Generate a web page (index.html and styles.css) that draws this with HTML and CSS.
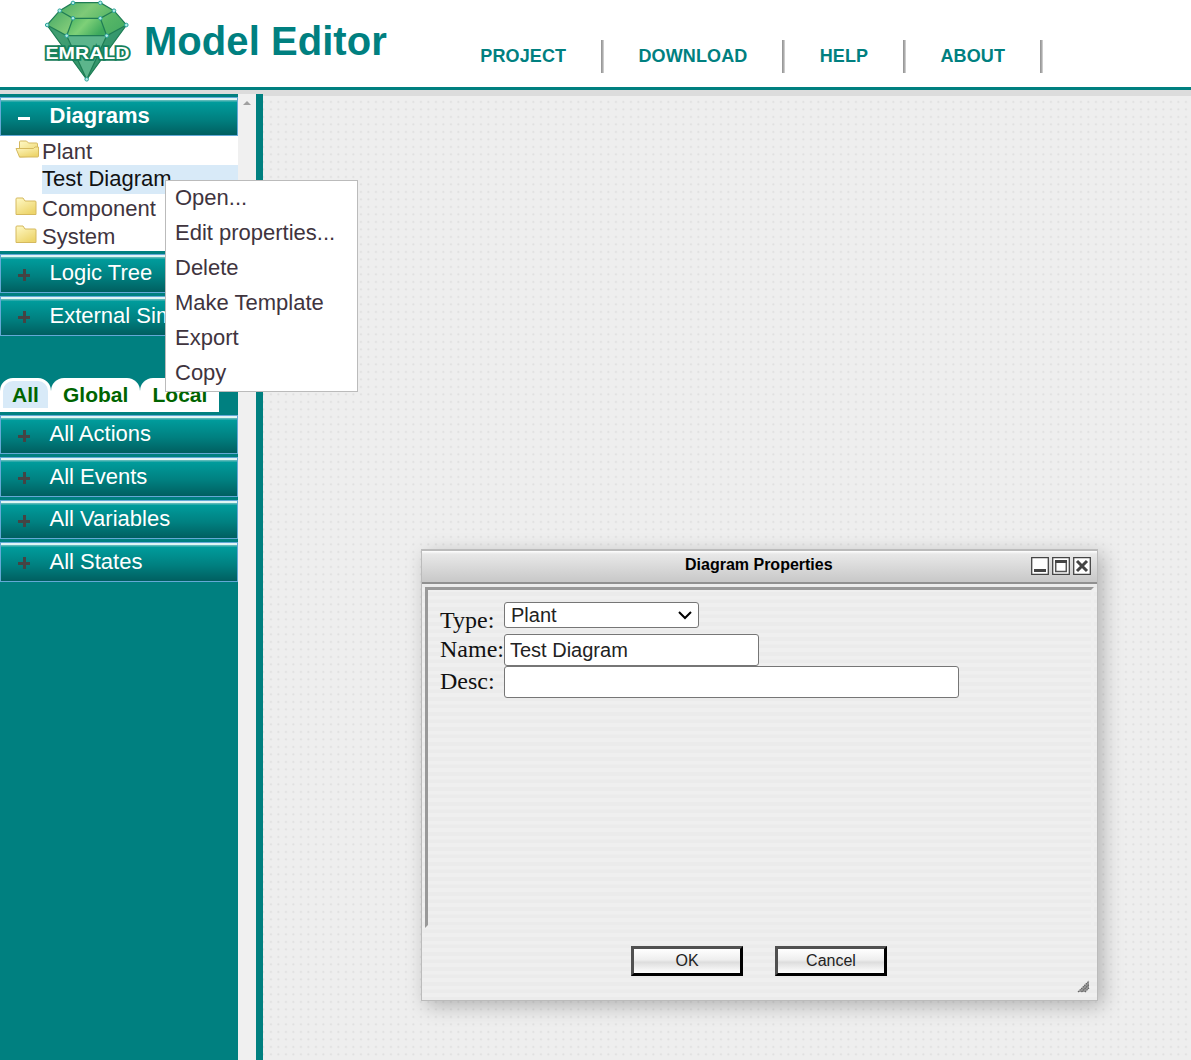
FILE: index.html
```html
<!DOCTYPE html>
<html lang="en">
<head>
<meta charset="utf-8">
<title>EMRALD Model Editor</title>
<link rel="stylesheet" href="styles.css">
</head>
<body>
<header class="header">
  <svg class="logo" width="90" height="84" viewBox="42 0 90 84">
    <defs>
      <linearGradient id="gem" x1="0" y1="0" x2="1" y2="1">
        <stop offset="0" stop-color="#35a060"/><stop offset=".3" stop-color="#7fca78"/><stop offset=".5" stop-color="#55b566"/><stop offset="1" stop-color="#2c9b5d"/>
      </linearGradient>
      <linearGradient id="facet" x1="0" y1="0" x2="1" y2=".4">
        <stop offset="0" stop-color="#46b15f"/><stop offset=".5" stop-color="#7ed078"/><stop offset="1" stop-color="#3da95d"/>
      </linearGradient>
    </defs>
    <path fill="url(#gem)" d="M73 2.700H100.300L114 10.700 126.500 25 86.700 79.500 47 25 59.700 10.700Z"/>
    <path fill="url(#facet)" d="M73 18.300H100.300L106.700 35.700H66.700Z"/>
    <path fill="#2f9070" opacity=".75" d="M47 25 66.700 35.700 86.700 79.500ZM126.500 25 106.700 35.700 86.700 79.500Z"/>
    <path fill="#5cb58c" d="M66.700 35.700H106.700L86.700 79.500Z"/>
    <path fill="none" stroke="#1f7d55" stroke-width="1.200" d="M73 2.700H100.300L114 10.700 126.500 25 86.700 79.500 47 25 59.700 10.700ZM59.700 10.700 73 18.300H100.300L114 10.700M73 18.300 66.700 35.700H106.700L100.300 18.300M47 25 66.700 35.700 86.700 79.500 106.700 35.700 126.500 25"/>
    <g fill="#b5ece6" stroke="#2aa39b" stroke-width="1">
      <circle cx="73" cy="2.900" r="1.800"/><circle cx="100.300" cy="2.900" r="1.800"/><circle cx="59.700" cy="10.700" r="1.800"/><circle cx="114" cy="10.700" r="1.800"/><circle cx="47.200" cy="25" r="1.800"/><circle cx="126.300" cy="25" r="1.800"/><circle cx="73" cy="18.300" r="1.800"/><circle cx="100.300" cy="18.300" r="1.800"/><circle cx="66.700" cy="35.700" r="1.800"/><circle cx="106.700" cy="35.700" r="1.800"/><circle cx="86.700" cy="79.300" r="1.800"/>
    </g>
    <text class="logo-text" x="45.500" y="59" textLength="84" lengthAdjust="spacingAndGlyphs">EMRALD</text>
  </svg>
  <h1 class="title">Model Editor</h1>
  <nav class="nav">
    <a class="nav-item">PROJECT</a><a class="nav-item">DOWNLOAD</a><a class="nav-item">HELP</a><a class="nav-item">ABOUT</a>
  </nav>
</header>
<div class="workspace">
  <aside class="sidebar">
    <div class="bar open"><span class="sign minus"></span>Diagrams</div>
    <div class="tree">
      <div class="node plant"><svg class="folder" width="26" height="20" viewBox="0 0 26 20"><defs><linearGradient id="fold" x2=".6" y2="1"><stop stop-color="#fff9c6"/><stop offset="1" stop-color="#edd56c"/></linearGradient></defs><path fill="url(#fold)" stroke="#d5b95e" d="M4 17V2q0-1 1-1h6l2 2h8q1 0 1 1v12Z"/><path fill="url(#fold)" stroke="#d5b95e" d="M.500 8.500H18l1.500-1.500h3.500V16q0 1-1 1H4Z"/></svg>Plant</div>
      <div class="leaf">Test Diagram</div>
      <div class="node component"><svg class="folder" width="26" height="20" viewBox="0 0 26 20"><path fill="url(#fold)" stroke="#d5b95e" d="M1 17.500V2q0-1 1-1h6l2 3h10q1 0 1 1v12.500Z"/></svg>Component</div>
      <div class="node system"><svg class="folder" width="26" height="20" viewBox="0 0 26 20"><path fill="url(#fold)" stroke="#d5b95e" d="M1 17.500V2q0-1 1-1h6l2 3h10q1 0 1 1v12.500Z"/></svg>System</div>
    </div>
    <div class="bar"><span class="sign plus"></span>Logic Tree</div>
    <div class="bar tall"><span class="sign plus"></span>External Sims</div>
    <div class="tabs"><span class="tab active">All</span><span class="tab global">Global</span><span class="tab local">Local</span></div>
    <div class="bar"><span class="sign plus"></span>All Actions</div>
    <div class="bar tall"><span class="sign plus"></span>All Events</div>
    <div class="bar"><span class="sign plus"></span>All Variables</div>
    <div class="bar tall"><span class="sign plus"></span>All States</div>
  </aside>
  <div class="scrollbar"><span class="scroll-arrow"></span></div>
  <div class="splitter"></div>
  <main class="canvas"></main>
</div>

<section class="dialog">
  <div class="dialog-title"><span class="dialog-name">Diagram Properties</span>
    <svg class="controls" width="61" height="19" viewBox="0 0 61 19">
      <g fill="#fff" stroke="#444" stroke-width="1.300"><path d="M.7.7h16.600v16.600H.7ZM21.700.7h16.600v16.600H21.700ZM42.700.7h16.600v16.600H42.700Z"/></g>
      <path fill="#444" d="M3 12h12v3H3Z"/>
      <path fill="none" stroke="#555" stroke-width="1.500" d="M24.700 4.500h10.600v10H24.700Z"/><path fill="#444" d="M24 3h12v3H24Z"/>
      <path fill="none" stroke="#444" stroke-width="3" d="m46 4 10 10M56 4 46 14"/>
    </svg>
  </div>
  <div class="frame">
    <div class="field type"><label class="label">Type:</label><span class="select-box"><select class="select"><option>Plant</option></select><svg class="chevron" width="14" height="9" viewBox="0 0 14 9"><path fill="none" stroke="#000" stroke-width="2" d="m1 1 6 6 6-6"/></svg></span></div>
    <div class="field"><label class="label">Name:</label><input class="input" value="Test Diagram"></div>
    <div class="field"><label class="label">Desc:</label><input class="input wide"></div>
  </div>
  <div class="actions"><button class="button">OK</button><button class="button">Cancel</button></div>
  <svg class="grip" width="13" height="13" viewBox="0 0 13 13"><path fill="#999" d="M1 12 12 1v7l-4 4Z"/><path fill="none" stroke="#666" stroke-width="1.200" stroke-dasharray="1.500 .7" d="m1 12 11-11M4.500 12 12 4.500M8 12l4-4"/></svg>
</section>

<div class="menu">
  <div class="menu-item">Open...</div><div class="menu-item">Edit properties...</div><div class="menu-item">Delete</div><div class="menu-item">Make Template</div><div class="menu-item">Export</div><div class="menu-item">Copy</div>
</div>
</body>
</html>
```

FILE: styles.css
```css
* { box-sizing: border-box; }
body { margin: 0; height: 1060px; overflow: hidden; position: relative; display: flex; flex-direction: column; font-family: "Liberation Sans", Arial, sans-serif; font-size: 22px; background: #ececec; }
.header { height: 90px; flex: none; display: flex; background: #fff; border-bottom: 3px solid #008080; color: #008080; }
.logo { margin-left: 42px; flex: none; }
.logo-text { font: bold 16.5px "Liberation Sans", Arial, sans-serif; fill: #fff; stroke: #16815c; stroke-width: 3.4px; paint-order: stroke; }
.title { margin: 0 0 0 12px; width: 302px; font-size: 40px; line-height: 82px; letter-spacing: .05px; white-space: nowrap; }
.nav { display: flex; padding-top: 40px; }
.nav-item { height: 33px; line-height: 32px; padding: 0 38px 0 34.3px; font-size: 18px; font-weight: bold; letter-spacing: .12px; background: linear-gradient(90deg, #999 0 1px, #aaa 1px 2px, #ccc 2px) right / 3px 100% no-repeat; }
.workspace { flex: 1; display: flex; border-top: 4px solid #dcdcdc; }
.sidebar { width: 238px; background: #008080; padding-top: 3px; }
.bar { height: 39px; margin-bottom: 3px; border: 1px solid #63a9d6; background: linear-gradient(#e0f5f5 0 1.5px, #5bb9b9 2px 3px, #009c9c 4px, #008080 58%, #005f60); color: #fff; display: flex; line-height: 36px; white-space: nowrap; overflow: hidden; }
.bar.open { font-weight: bold; margin: 0; }
.bar.tall { height: 40px; line-height: 38px; }
.sign { width: 12px; height: 12px; margin: 14px 19.5px 0 17px; flex: none; }
.minus { background: linear-gradient(#fff, #fff) 0 5px / 12px 3px no-repeat; }
.plus { background: linear-gradient(#444, #444) 0 5px / 12px 3px no-repeat, linear-gradient(#444, #444) 5px 0 / 3px 12px no-repeat; }
.tree { height: 115px; margin-bottom: 3px; background: #fff; color: #40343e; }
.node { display: flex; height: 28px; line-height: 30px; padding-left: 15px; }
.folder { width: 27px; flex: none; margin-top: 4px; }
.node.plant { height: 29px; line-height: 31px; }
.node.component, .node.system { padding-left: 14px; }
.component .folder, .system .folder { width: 28px; margin-top: 3px; }
.leaf { height: 29px; line-height: 27px; margin-left: 42px; background: #d8eaf8; color: #111; }
.tabs { display: flex; height: 34px; width: 219px; margin: 42px 0 3px; font-size: 21px; font-weight: bold; line-height: 34px; color: #006400; }
.tab { background: #fff; border-radius: 13px 13px 0 0; }
.tab.active { width: 51px; padding-left: 9px; background: #d8eaf8; border: 3px solid #fff; border-bottom-width: 4px; line-height: 28px; }
.tab.global { width: 89px; padding-left: 12px; }
.tab.local { width: 79px; padding-left: 12.5px; }
.scrollbar { width: 18px; background: #f0f0f0; padding: 7px 0 0 5px; }
.scroll-arrow { display: block; width: 0; border: 4px solid transparent; border-top: 0; border-bottom-color: #a0a0a0; }
.splitter { width: 7px; background: #008080; }
.canvas { flex: 1; border-top: 2px solid #dcdcdc; background: radial-gradient(circle at 4px 4px, #e0e0e0 0 .8px, transparent 1.3px) 4px 2px / 7.5px 7.5px, #eee; }
.dialog { position: absolute; left: 421px; top: 549px; width: 677px; height: 452px; display: flex; flex-direction: column; border: 1px solid #bbb; border-top-width: 2px; background: repeating-linear-gradient(#efefef 0 3px, #ebebeb 4px 7px, #efefef 7.5px); box-shadow: 5px 5px 18px rgba(0,0,0,.25); }
.dialog-title { height: 33px; flex: none; display: flex; justify-content: flex-end; background: linear-gradient(#fff, #e8e8e8 3px, #c8c8c8); border-bottom: 2px solid #909090; font-size: 16px; font-weight: bold; line-height: 27px; }
.dialog-name { flex: 1; padding-left: 263px; }
.controls { flex: none; margin: 6px 5px 0 0; }
.frame { height: 341px; margin: 3px 3px 0; padding: 12px; border: 3px solid; border-color: #999 #eee #eee #999; }
.field { display: flex; height: 32px; line-height: 31px; }
.field.type { line-height: 37px; }
.label { width: 64px; white-space: nowrap; font-family: "Liberation Serif", "Times New Roman", serif; font-size: 24px; color: #111; }
.select-box { display: flex; width: 195px; height: 26px; align-items: center; border: 1px solid #767676; border-radius: 3px; background: #fff; }
.select { appearance: none; flex: 1; border: 0; background: none; padding: 0 6px; font: 20px "Liberation Sans", Arial, sans-serif; color: #222; }
.chevron { margin-right: 6px; }
.input { width: 255px; height: 32px; border: 1px solid #767676; border-radius: 3px; padding: 0 5px; font: 20px "Liberation Sans", Arial, sans-serif; color: #222; }
.input.wide { width: 455px; }
.actions { display: flex; gap: 32px; margin: 18px 0 0 209px; }
.button { width: 112px; height: 30px; padding: 0; border: 3px solid; border-color: #505050 #000 #000 #505050; background: linear-gradient(#fff, #eee 45%, #ddd 55%, #fff); font: 16px "Liberation Sans", Arial, sans-serif; color: #222; }
.grip { position: absolute; right: 7px; bottom: 7px; }
.menu { position: absolute; left: 165px; top: 180px; width: 193px; height: 212px; border: 1px solid #bbb; background: #fff; color: #40343e; }
.menu-item { height: 35px; line-height: 33px; padding-left: 9px; }
```
